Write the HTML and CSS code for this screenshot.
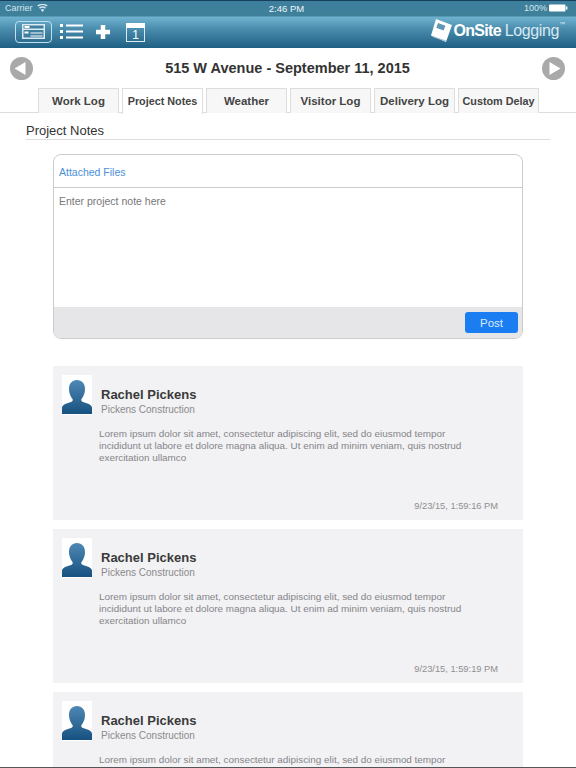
FILE: index.html
```html
<!DOCTYPE html>
<html lang="en">
<head>
<meta charset="utf-8">
<title>Project Notes</title>
<link rel="stylesheet" href="styles.css">
</head>
<body>
<div class="app">
  <header class="header">
    <div class="status">
      <div class="status-left">Carrier
        <svg class="wifi" width="11" height="8" viewBox="0 0 11 8"><path d="M5.5 8 3.7 5.700a3 3 0 0 1 3.600 0zM2.900 4.700 2 3.600a5.800 5.800 0 0 1 7 0L8.100 4.700a4.300 4.300 0 0 0-5.200 0zM1.200 2.600.3 1.600a8.300 8.300 0 0 1 10.400 0L9.800 2.600a6.900 6.900 0 0 0-8.600 0z" fill="#d5e6ee"/></svg>
      </div>
      <div class="status-time">2:46 PM</div>
      <div class="status-right">100%
        <svg width="19" height="8" viewBox="0 0 19 8"><rect width="16.500" height="7" y=".5" rx="1" fill="#fff"/><rect x="17" y="2.500" width="1.500" height="3" fill="#e5f0f5"/></svg>
      </div>
    </div>
    <div class="toolbar">
      <div class="tools">
        <div class="tool-active">
          <svg width="23" height="15" viewBox="0 0 23 15"><rect x="0" y="0" width="23" height="15" fill="#dcebf2"/><rect x="1.500" y="1.500" width="20" height="3" fill="#3f7f9f"/><rect x="1.500" y="6" width="20" height="7.500" fill="#3f7f9f"/><rect x="2.500" y="2" width="5" height="2" fill="#fff"/><rect x="2.500" y="7.500" width="4" height="2" fill="#fff"/><path d="M8.500 9h12M8.500 12h12" stroke="#fff"/></svg>
        </div>
        <svg class="tool-list" width="23" height="15" viewBox="0 0 23 15"><g fill="#fff"><rect x="0" y="0" width="3" height="3"/><rect x="0" y="6" width="3" height="3"/><rect x="0" y="12" width="3" height="3"/><rect x="6" y=".5" width="17" height="2"/><rect x="6" y="6.500" width="17" height="2"/><rect x="6" y="12.500" width="17" height="2"/></g></svg>
        <svg class="tool-plus" width="16" height="16" viewBox="0 0 16 16"><path d="M8 1v14M1 8h14" stroke="#fff" stroke-width="4.500"/></svg>
        <svg class="tool-cal" width="19" height="19" viewBox="0 0 19 19"><rect x=".5" y=".5" width="18" height="18" fill="none" stroke="#dcebf2"/><rect width="19" height="5" fill="#fff"/><text x="9.500" y="16" text-anchor="middle" class="cal-day">1</text></svg>
      </div>
      <div class="logo">
        <svg width="21" height="23" viewBox="0 0 21 23"><path d="M5 0 21 6 15 23 0 16.500z" fill="#fff"/><path d="M7 4 14.500 6.800 12.500 11.500 5.300 8.700z" fill="#5f97b5"/><path d="M1.500 17.500 15 22" stroke="#9fc0d2"/></svg>
        <span class="logo-on">OnSite</span><span class="logo-log">Logging</span><span class="logo-tm">™</span>
      </div>
    </div>
  </header>

  <div class="title-row">
    <svg class="nav" width="23" height="23" viewBox="0 0 23 23"><circle cx="11.500" cy="11.500" r="11.500" fill="#a9a9a9"/><path d="M4.500 11.500 15.500 5v13z" fill="#fff"/></svg>
    <h1 class="title">515 W Avenue - September 11, 2015</h1>
    <svg class="nav" width="23" height="23" viewBox="0 0 23 23"><circle cx="11.500" cy="11.500" r="11.500" fill="#a9a9a9"/><path d="M18.500 11.500 7.500 5v13z" fill="#fff"/></svg>
  </div>

  <nav class="tabs">
    <div class="tab">Work Log</div>
    <div class="tab tab-active">Project Notes</div>
    <div class="tab">Weather</div>
    <div class="tab">Visitor Log</div>
    <div class="tab">Delivery Log</div>
    <div class="tab tab-small">Custom Delay</div>
  </nav>

  <main class="content">
    <h2 class="section">Project Notes</h2>
    <section class="form">
      <div class="attached">Attached Files</div>
      <div class="note">Enter project note here</div>
      <div class="form-foot"><button class="post">Post</button></div>
    </section>

    <article class="comment">
      <div class="comment-head">
        <div class="avatar"><svg width="30" height="40" viewBox="0 0 30 40"><use href="#person"/></svg></div>
        <div class="who"><div class="name">Rachel Pickens</div><div class="company">Pickens Construction</div></div>
      </div>
      <p class="body">Lorem ipsum dolor sit amet, consectetur adipiscing elit, sed do eiusmod tempor<br>incididunt ut labore et dolore magna aliqua. Ut enim ad minim veniam, quis nostrud<br>exercitation ullamco</p>
      <div class="stamp">9/23/15, 1:59:16 PM</div>
    </article>

    <article class="comment">
      <div class="comment-head">
        <div class="avatar"><svg width="30" height="40" viewBox="0 0 30 40"><use href="#person"/></svg></div>
        <div class="who"><div class="name">Rachel Pickens</div><div class="company">Pickens Construction</div></div>
      </div>
      <p class="body">Lorem ipsum dolor sit amet, consectetur adipiscing elit, sed do eiusmod tempor<br>incididunt ut labore et dolore magna aliqua. Ut enim ad minim veniam, quis nostrud<br>exercitation ullamco</p>
      <div class="stamp">9/23/15, 1:59:19 PM</div>
    </article>

    <article class="comment">
      <div class="comment-head">
        <div class="avatar"><svg width="30" height="40" viewBox="0 0 30 40"><use href="#person"/></svg></div>
        <div class="who"><div class="name">Rachel Pickens</div><div class="company">Pickens Construction</div></div>
      </div>
      <p class="body">Lorem ipsum dolor sit amet, consectetur adipiscing elit, sed do eiusmod tempor</p>
    </article>
  </main>
  <div class="edge"></div>
</div>
<svg class="defs" width="0" height="0">
  <defs>
    <linearGradient id="pg" x1="0" y1="0" x2="0" y2="1"><stop offset="0" stop-color="#4f88b5"/><stop offset="1" stop-color="#17517f"/></linearGradient>
    <symbol id="person" viewBox="0 0 30 40">
      <path d="M15 5c5 0 8 3.500 8 9 0 4-1.500 7.500-3.500 10-.7 1 0 2.500 1.500 3 4 1.200 8.500 2.500 9 5.500V39H0v-6.500c.5-3 5-4.300 9-5.500 1.500-.5 2.200-2 1.500-3C8.500 21.500 7 18 7 14c0-5.500 3-9 8-9z" fill="url(#pg)"/>
    </symbol>
  </defs>
</svg>
</body>
</html>
```
FILE: styles.css
```css
* { box-sizing: border-box; }
html, body { margin: 0; padding: 0; }
body { font-family: "Liberation Sans", Arial, sans-serif; background: #fff; color: #333; }
.app { width: 576px; height: 768px; overflow: hidden; display: flex; flex-direction: column; position: relative; }
.defs { display: block; height: 0; }

.header { height: 48px; flex: none; background: linear-gradient(#3d7f9d 0, #3f8099 15px, #6fb2d0 16px, #4a8cac 28px, #1c5d82 48px); border-top: 1px solid #153f5a; }
.status { height: 14px; display: grid; grid-template-columns: 1fr auto 1fr; align-items: center; padding: 0 8px 0 5px; font-size: 9px; color: #d5e6ee; }
.status-left { display: flex; align-items: center; gap: 4px; }
.status-time { font-size: 9.500px; color: #eef6fa; }
.status-right { display: flex; justify-content: flex-end; align-items: center; gap: 2px; }

.toolbar { height: 33px; display: flex; align-items: center; justify-content: space-between; padding: 0 11px 0 15px; }
.tools { display: flex; align-items: center; }
.tool-active { width: 37px; height: 22px; border: 1px solid #bfe0ee; border-radius: 4px; display: flex; align-items: center; justify-content: center; }
.tool-list { margin-left: 8px; }
.tool-plus { margin-left: 12px; }
.tool-cal { margin-left: 15px; margin-top: 1px; }
.cal-day { font-size: 12px; fill: #fff; font-family: "Liberation Sans", sans-serif; }

.logo { display: flex; align-items: center; color: #fff; margin-top: -2px; }
.logo svg { margin-right: 1px; }
.logo-on { font-size: 16px; font-weight: 700; letter-spacing: -.7px; }
.logo-log { font-size: 16px; margin-left: 4px; letter-spacing: -.4px; color: #d8eaf3; font-weight: 400; }
.logo-tm { font-size: 6px; align-self: flex-start; margin-top: 2px; color: #d8eaf3; }

.title-row { height: 40px; flex: none; display: flex; align-items: center; justify-content: space-between; padding: 0 11px 0 10px; }
.title { margin: 0; font-size: 14.500px; font-weight: 700; color: #333; }
.nav { flex: none; }

.tabs { height: 25px; flex: none; display: flex; gap: 3px; padding-left: 38px; border-bottom: 1px solid #ddd; }
.tab { width: 81px; height: 25px; background: #f7f7f7; border: 1px solid #ddd; border-bottom: 0; font-size: 11.500px; font-weight: 700; color: #444; display: flex; align-items: center; justify-content: center; white-space: nowrap; }
.tab-active { background: #fff; height: 26px; padding-bottom: 2px; font-size: 10.800px; }
.tab-small { font-size: 10.800px; }

.content { flex: 1; min-height: 0; padding: 0 26px; }
.section { margin: 0; padding-top: 10px; height: 27px; font-size: 13px; line-height: 15px; font-weight: 400; color: #333; border-bottom: 1px solid #ddd; }

.form { margin: 14px 27px 0; height: 185px; border: 1px solid #ccc; border-radius: 8px; overflow: hidden; display: flex; flex-direction: column; }
.attached { height: 33px; flex: none; padding: 0 5px; font-size: 10.500px; line-height: 35px; color: #4a90d9; border-bottom: 1px solid #ccc; }
.note { flex: 1; padding: 7px 5px; font-size: 10.500px; color: #777; }
.form-foot { height: 31px; flex: none; background: #e6e6e8; display: flex; justify-content: flex-end; align-items: flex-start; padding: 5px 4px 0 0; }
.post { width: 53px; height: 21px; border: 0; border-radius: 3px; background: #1a7ef2; color: #dbeafc; font: 11.500px "Liberation Sans", Arial, sans-serif; padding: 0; }

.comment { margin: 27px 27px 0; height: 154px; background: #f2f1f3; padding: 9px 0 0 9px; position: relative; }
.comment + .comment { margin-top: 9px; }
.comment-head { display: flex; height: 40px; }
.avatar { width: 30px; height: 40px; background: #fff; flex: none; }
.avatar svg { display: block; }
.who { margin-left: 9px; padding-top: 12px; }
.name { font-size: 13px; line-height: 16px; font-weight: 700; color: #3a3a3a; }
.company { font-size: 10px; line-height: 14px; color: #8a8a8c; }
.body { margin: 13px 0 0 37px; font-size: 9.900px; line-height: 12px; color: #85858a; white-space: nowrap; }
.stamp { position: absolute; right: 25px; bottom: 8px; font-size: 9.300px; line-height: 12px; color: #8f8f92; }

.edge { position: absolute; left: 0; right: 0; bottom: 0; height: 1px; background: #555; }
```
